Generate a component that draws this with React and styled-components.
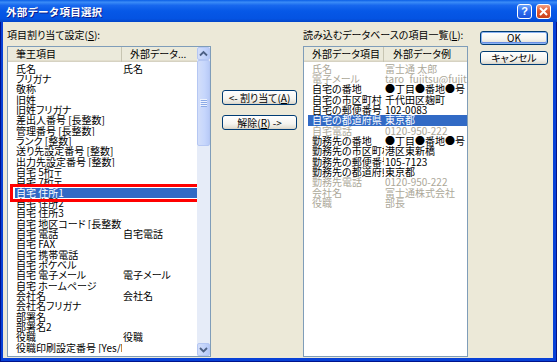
import React from 'react';
import styled, { createGlobalStyle, css } from 'styled-components';

const GlobalStyle = createGlobalStyle`
  html, body {
    margin: 0;
    padding: 0;
    background: #fff;
  }
  body {
    font-family: "Noto Sans CJK JP", "Liberation Sans", sans-serif;
    font-size: 10px;
    font-feature-settings: "palt";
    color: #000;
  }
`;

const Window = styled.div`
  width: 557px;
  height: 362px;
  display: flex;
  flex-direction: column;
  background: #0841d6;
  box-shadow: inset 0 0 0 1px #00138c;
  overflow: hidden;
`;

const TitleBar = styled.div`
  height: 22px;
  flex: none;
  display: flex;
  align-items: center;
  padding: 0 6px 0 6px;
  background: linear-gradient(180deg, #0a5ee6 0%, #3b8cf7 10%, #1868ee 24%, #0658e7 50%, #0453e2 85%, #0345c8 100%);
`;

const Title = styled.span`
  flex: 1;
  color: #fff;
  font-weight: bold;
  font-size: 10.5px;
  font-feature-settings: normal;
  letter-spacing: 0.2px;
  text-shadow: 1px 1px 0 #0a1e8c;
`;

const CaptionButton = styled.div`
  width: 13px;
  height: 13px;
  margin-left: 4px;
  border: 1px solid #fff;
  border-radius: 3px;
  display: flex;
  align-items: center;
  justify-content: center;
  color: #fff;
  font-family: "Liberation Sans", sans-serif;
  font-weight: bold;
  font-size: 11px;
  line-height: 1;
  ${p => p.$close ? css`
    background: linear-gradient(180deg, #f2a184 0%, #e05a32 45%, #c8401a 100%);
  ` : css`
    background: linear-gradient(180deg, #6da3fa 0%, #2e6ff0 45%, #1d52dc 100%);
  `}
`;

const Client = styled.div`
  flex: 1;
  min-height: 0;
  display: flex;
  margin: 0 4px 4px 3px;
  padding: 7px 5px 1px 4px;
  background: #ece9d8;
`;

const Column = styled.div`
  width: ${p => p.$w}px;
  flex: none;
  display: flex;
  flex-direction: column;
`;

const Label = styled.div`
  height: 12px;
  line-height: 12px;
  margin-bottom: 5px;
  white-space: nowrap;
  u { text-decoration: underline; text-underline-offset: 1px; }
`;

const ListBox = styled.div`
  flex: 1;
  min-height: 0;
  display: flex;
  border: 1px solid #7f9db9;
  background: #fff;
`;

const ListContent = styled.div`
  flex: 1;
  min-width: 0;
  display: flex;
  flex-direction: column;
  overflow: hidden;
`;

const Header = styled.div`
  height: 15px;
  flex: none;
  display: flex;
  background: #ebeadb;
  box-shadow: inset 0 -1px 0 #d6d2c2, inset 0 -2px 0 #e2decd;
`;

const HeaderCell = styled.div`
  width: ${p => p.$w}px;
  flex: ${p => p.$w ? 'none' : '1'};
  box-sizing: border-box;
  padding-left: ${p => p.$pad}px;
  line-height: 14px;
  white-space: nowrap;
  overflow: hidden;
  border-right: ${p => p.$divider ? '1px solid #c7c5b2' : 'none'};
`;

const Rows = styled.div`
  padding-top: 1.5px;
  display: flex;
  flex-direction: column;
`;

const Row = styled.div`
  position: relative;
  display: flex;
  height: 10.35px;
  line-height: 10.35px;
  margin-left: ${p => p.$inset}px;
  white-space: nowrap;
  color: ${p => (p.$selected ? '#fff' : p.$dim ? '#aca899' : '#000')};
  background: ${p => (p.$selected ? '#316ac5' : 'transparent')};
  ${p => p.$marked && css`
    &::after {
      content: '';
      position: absolute;
      top: -4px;
      bottom: -4px;
      left: -5px;
      right: -5px;
      border: 3px solid #f00;
      z-index: 2;
    }
  `}
`;

const Cell = styled.div`
  width: ${p => p.$w}px;
  flex: ${p => p.$w ? 'none' : '1'};
  box-sizing: border-box;
  padding-left: ${p => p.$pad}px;
  overflow: hidden;
`;

const ScrollBar = styled.div`
  width: 13px;
  flex: none;
  display: flex;
  flex-direction: column;
  background: #e6ecf8;
`;

const ScrollButton = styled.div`
  height: 13px;
  flex: none;
  box-sizing: border-box;
  border: 1px solid #b5c7f3;
  border-radius: 2px;
  background: linear-gradient(90deg, #d3def9 0%, #c2d3fb 60%, #b6c9f6 100%);
  display: flex;
  align-items: center;
  justify-content: center;
`;

const Track = styled.div`
  flex: 1;
  display: flex;
  flex-direction: column;
`;

const Thumb = styled.div`
  height: 86px;
  box-sizing: border-box;
  border: 1px solid #b5c7f3;
  border-radius: 2px;
  background: linear-gradient(90deg, #d3def9 0%, #c6d6fc 60%, #b9cbf7 100%);
  display: flex;
  align-items: center;
  justify-content: center;
`;

const Middle = styled.div`
  width: 92px;
  flex: none;
  display: flex;
  flex-direction: column;
  gap: 10px;
  padding: 61px 0 0 11px;
  box-sizing: border-box;
`;

const Button = styled.div`
  width: ${p => p.$w}px;
  height: ${p => p.$h}px;
  box-sizing: border-box;
  border: 1px solid #003c74;
  border-radius: 3px;
  background: linear-gradient(180deg, #ffffff 0%, #f5f4ef 60%, #e3e0d5 90%, #d6d0c5 100%);
  display: flex;
  align-items: center;
  justify-content: center;
  white-space: nowrap;
  line-height: 1;
  ${p => p.$default && css`
    box-shadow: inset 0 0 0 1px #8cb4f2, inset 0 -1px 0 1px #6a8fe4;
  `}
  u { text-decoration: underline; text-underline-offset: 1px; }
`;

const Side = styled.div`
  width: 68px;
  flex: none;
  margin-left: 12px;
  padding-top: 2px;
  display: flex;
  flex-direction: column;
  gap: 6px;
`;

const leftRows = [
  ['氏名', '氏名'],
  ['フリガナ'],
  ['敬称'],
  ['旧姓'],
  ['旧姓フリガナ'],
  ['差出人番号 [長整数]'],
  ['管理番号 [長整数]'],
  ['ランク [整数]'],
  ['送り先設定番号 [整数]'],
  ['出力先設定番号 [整数]'],
  ['自宅 5桁〒'],
  ['自宅 7桁〒'],
  ['自宅 住所1', '', 'sel'],
  ['自宅 住所2'],
  ['自宅 住所3'],
  ['自宅 地区コード [長整数]'],
  ['自宅 電話', '自宅電話'],
  ['自宅 FAX'],
  ['自宅 携帯電話'],
  ['自宅 ポケベル'],
  ['自宅 電子メール', '電子メール'],
  ['自宅 ホームページ'],
  ['会社名', '会社名'],
  ['会社名フリガナ'],
  ['部署名'],
  ['部署名2'],
  ['役職', '役職'],
  ['役職印刷設定番号 [Yes/No]'],
];

const rightRows = [
  ['氏名', '富士通 太郎', 'dim'],
  ['電子メール', 'taro_fujitsu@fujitsu.com', 'dim'],
  ['自宅の番地', '●丁目●番地●号'],
  ['自宅の市区町村', '千代田区麹町'],
  ['自宅の郵便番号', '102-0083'],
  ['自宅の都道府県', '東京都', 'sel'],
  ['自宅電話', '0120-950-222', 'dim'],
  ['勤務先の番地', '●丁目●番地●号'],
  ['勤務先の市区町村', '港区東新橋'],
  ['勤務先の郵便番号', '105-7123'],
  ['勤務先の都道府県', '東京都'],
  ['勤務先電話', '0120-950-222', 'dim'],
  ['会社名', '富士通株式会社', 'dim'],
  ['役職', '部長', 'dim'],
];

const Arrow = ({ down }) => (
  <svg width="9" height="7" viewBox="0 0 9 7">
    <polyline
      points={down ? '1,2 4.5,5.5 8,2' : '1,5.5 4.5,2 8,5.5'}
      fill="none"
      stroke="#4d6185"
      strokeWidth="1.8"
    />
  </svg>
);

const Grip = () => (
  <svg width="7" height="8" viewBox="0 0 7 8">
    {[0, 2, 4, 6].map(y => (
      <line key={y} x1="0" y1={y + 0.5} x2="7" y2={y + 0.5} stroke="#eef3fe" strokeWidth="1" />
    ))}
    {[1, 3, 5, 7].map(y => (
      <line key={y} x1="1" y1={y + 0.5} x2="7" y2={y + 0.5} stroke="#8caae6" strokeWidth="1" />
    ))}
  </svg>
);

export default function App() {
  return (
    <>
      <GlobalStyle />
      <Window>
        <TitleBar>
          <Title>外部データ項目選択</Title>
          <CaptionButton>?</CaptionButton>
          <CaptionButton $close>
            <svg width="9" height="9" viewBox="0 0 9 9">
              <path d="M1 1 L8 8 M8 1 L1 8" stroke="#fff" strokeWidth="2" />
            </svg>
          </CaptionButton>
        </TitleBar>
        <Client>
          <Column $w={204}>
            <Label>項目割り当て設定(<u>S</u>):</Label>
            <ListBox>
              <ListContent>
                <Header>
                  <HeaderCell $w={114} $pad={8} $divider>筆王項目</HeaderCell>
                  <HeaderCell $pad={8}>外部データ...</HeaderCell>
                </Header>
                <Rows>
                  {leftRows.map(([a, b, flag], i) => (
                    <Row key={i} $inset={7} $selected={flag === 'sel'} $marked={flag === 'sel'}>
                      <Cell $w={107} $pad={1}>{a}</Cell>
                      <Cell $pad={1}>{b}</Cell>
                    </Row>
                  ))}
                </Rows>
              </ListContent>
              <ScrollBar>
                <ScrollButton><Arrow /></ScrollButton>
                <Track>
                  <Thumb><Grip /></Thumb>
                </Track>
                <ScrollButton><Arrow down /></ScrollButton>
              </ScrollBar>
            </ListBox>
          </Column>
          <Middle>
            <Button $w={75} $h={15}>&lt;- 割り当て(<u>A</u>)</Button>
            <Button $w={75} $h={15}>解除(<u>R</u>) -&gt;</Button>
          </Middle>
          <Column $w={165}>
            <Label>読み込むデータベースの項目一覧(<u>L</u>):</Label>
            <ListBox>
              <ListContent>
                <Header>
                  <HeaderCell $w={80} $pad={8} $divider>外部データ項目</HeaderCell>
                  <HeaderCell $pad={9}>外部データ例</HeaderCell>
                </Header>
                <Rows>
                  {rightRows.map(([a, b, flag], i) => (
                    <Row key={i} $inset={4} $selected={flag === 'sel'} $dim={flag === 'dim'}>
                      <Cell $w={76} $pad={4}>{a}</Cell>
                      <Cell $pad={1}>{b}</Cell>
                    </Row>
                  ))}
                </Rows>
              </ListContent>
            </ListBox>
          </Column>
          <Side>
            <Button $w={68} $h={14} $default>OK</Button>
            <Button $w={68} $h={14}>キャンセル</Button>
          </Side>
        </Client>
      </Window>
    </>
  );
}
